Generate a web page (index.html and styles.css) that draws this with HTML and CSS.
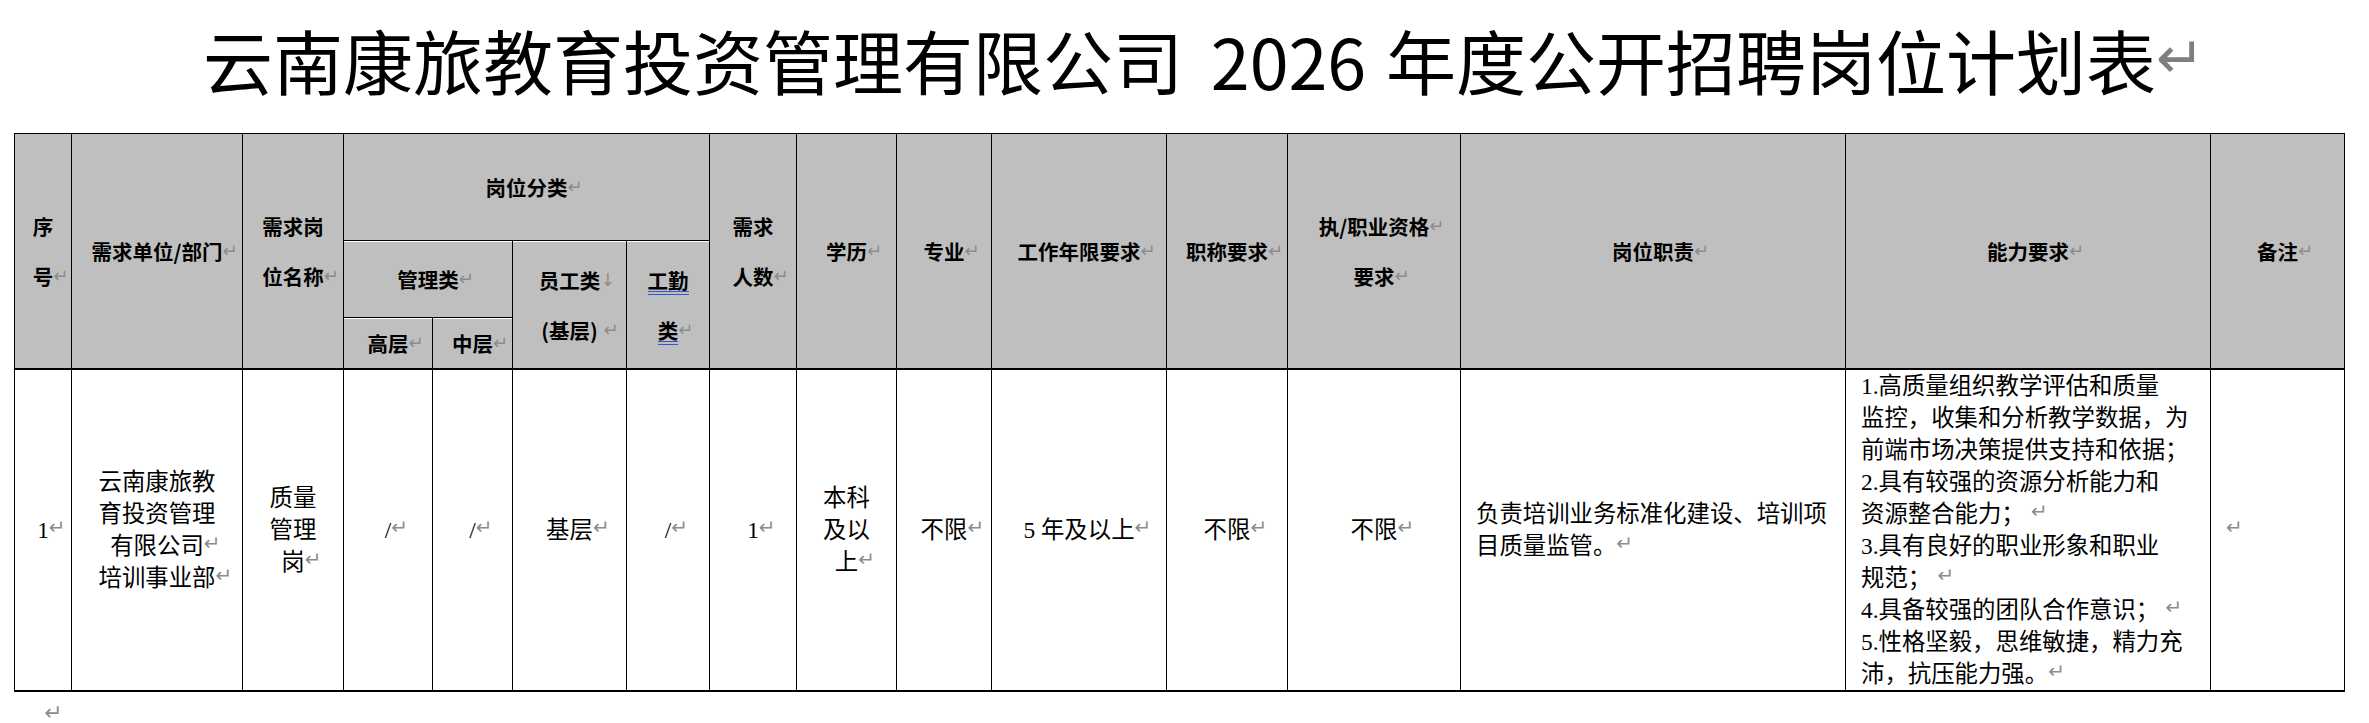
FILE: index.html
```html
<!DOCTYPE html>
<html lang="zh-CN">
<head>
<meta charset="utf-8">
<title>云南康旅教育投资管理有限公司 2026 年度公开招聘岗位计划表</title>
<link rel="stylesheet" href="styles.css">
</head>
<body>
<div class="page">
  <h1 class="title">云南康旅教育投资管理有限公司 <span class="yr">2026</span> 年度公开招聘岗位计划表<span class="pm pm-title">↵</span></h1>
  <table class="plan">
    <colgroup>
      <col class="w57"><col class="w171"><col class="w101"><col class="w89"><col class="w80"><col class="w114"><col class="w83"><col class="w87"><col class="w100"><col class="w95"><col class="w175"><col class="w121"><col class="w173"><col class="w385"><col class="w365"><col class="w134">
    </colgroup>
    <thead>
      <tr class="hr1">
        <th rowspan="3">序<br>号<span class="pm">↵</span></th>
        <th rowspan="3">需求单位/部门<span class="pm">↵</span></th>
        <th rowspan="3">需求岗<br>位名称<span class="pm">↵</span></th>
        <th colspan="4">岗位分类<span class="pm">↵</span></th>
        <th rowspan="3">需求<br>人数<span class="pm">↵</span></th>
        <th rowspan="3">学历<span class="pm">↵</span></th>
        <th rowspan="3">专业<span class="pm">↵</span></th>
        <th rowspan="3">工作年限要求<span class="pm">↵</span></th>
        <th rowspan="3">职称要求<span class="pm">↵</span></th>
        <th rowspan="3">执/职业资格<span class="pm">↵</span><br>要求<span class="pm">↵</span></th>
        <th rowspan="3">岗位职责<span class="pm">↵</span></th>
        <th rowspan="3">能力要求<span class="pm">↵</span></th>
        <th rowspan="3">备注<span class="pm">↵</span></th>
      </tr>
      <tr class="hr2">
        <th colspan="2" class="sub">管理类<span class="pm">↵</span></th>
        <th rowspan="2" class="sub">员工类<span class="pm">↓</span><br>(基层)<span class="pm"> ↵</span></th>
        <th rowspan="2" class="sub"><span class="mark">工勤</span><br><span class="mark">类</span><span class="pm">↵</span></th>
      </tr>
      <tr class="hr3">
        <th class="sub">高层<span class="pm">↵</span></th>
        <th class="sub">中层<span class="pm">↵</span></th>
      </tr>
    </thead>
    <tbody>
      <tr class="br1">
        <td>1<span class="pm">↵</span></td>
        <td>云南康旅教<br>育投资管理<br>有限公司<span class="pm">↵</span><br>培训事业部<span class="pm">↵</span></td>
        <td>质量<br>管理<br>岗<span class="pm">↵</span></td>
        <td>/<span class="pm">↵</span></td>
        <td>/<span class="pm">↵</span></td>
        <td>基层<span class="pm">↵</span></td>
        <td>/<span class="pm">↵</span></td>
        <td>1<span class="pm">↵</span></td>
        <td>本科<br>及以<br>上<span class="pm">↵</span></td>
        <td>不限<span class="pm">↵</span></td>
        <td>5 年及以上<span class="pm">↵</span></td>
        <td>不限<span class="pm">↵</span></td>
        <td>不限<span class="pm">↵</span></td>
        <td class="left">负责培训业务标准化建设、培训项<br>目质量监管。<span class="pm">↵</span></td>
        <td class="left">1.高质量组织教学评估和质量<br>监控，收集和分析教学数据，为<br>前端市场决策提供支持和依据；<br>2.具有较强的资源分析能力和<br>资源整合能力；<span class="pm"> ↵</span><br>3.具有良好的职业形象和职业<br>规范；<span class="pm"> ↵</span><br>4.具备较强的团队合作意识；<span class="pm"> ↵</span><br>5.性格坚毅，思维敏捷，精力充<br>沛，抗压能力强。<span class="pm">↵</span></td>
        <td class="left"><span class="pm">↵</span></td>
      </tr>
    </tbody>
  </table>
  <p class="after"><span class="pm pm-after">↵</span></p>
</div>
</body>
</html>
```
FILE: styles.css
```css
html, body {
  margin: 0;
  padding: 0;
  background: #fff;
}

body {
  font-family: "Liberation Serif", "Noto Sans CJK SC", serif;
  color: #000;
}

.page {
  margin-left: 14px;
  width: 2331px;
}

.title {
  box-sizing: border-box;
  height: 133px;
  margin: 0;
  padding-top: 9px;
  font-family: "Noto Sans CJK SC", sans-serif;
  font-weight: 400;
  font-size: 70px;
  line-height: 101px;
  text-align: center;
  white-space: nowrap;
}

.yr {
  margin-left: 12px;
  margin-right: 4px;
}

.pm {
  display: inline-block;
  width: 0;
  white-space: pre;
  font-family: "DejaVu Sans", sans-serif;
  font-weight: 400;
  font-size: 18px;
  line-height: 1;
  color: #8c8c8c;
  vertical-align: 3px;
}

.pm-title {
  font-size: 58px;
  color: #7f7f7f;
  vertical-align: 12px;
}

.plan {
  border-collapse: collapse;
  table-layout: fixed;
  width: 2331px;
}

.w57 { width: 57px; }
.w171 { width: 171px; }
.w101 { width: 101px; }
.w89 { width: 89px; }
.w80 { width: 80px; }
.w114 { width: 114px; }
.w83 { width: 83px; }
.w87 { width: 87px; }
.w100 { width: 100px; }
.w95 { width: 95px; }
.w175 { width: 175px; }
.w121 { width: 121px; }
.w173 { width: 173px; }
.w385 { width: 385px; }
.w365 { width: 365px; }
.w134 { width: 134px; }

.plan th,
.plan td {
  border: 1px solid #000;
  padding: 0;
  vertical-align: middle;
  text-align: center;
  white-space: nowrap;
}

.plan th {
  background: #bfbfbf;
  font-family: "Noto Sans CJK SC", sans-serif;
  font-weight: 700;
  font-size: 20.5px;
  line-height: 50px;
}

.plan th.sub {
  box-shadow: inset 0 1px 0 #fff;
}

.hr1 { height: 107px; }
.hr2 { height: 77px; }
.hr3 { height: 51px; }

.plan td {
  font-size: 23.4px;
  line-height: 32px;
  border-top: 2px solid #000;
  border-bottom: 2px solid #000;
}

.plan td .pm {
  font-size: 20px;
  vertical-align: 4px;
}

.br1 { height: 321px; }

.plan td.left {
  text-align: left;
  padding-left: 15px;
}

.mark {
  display: inline-block;
  line-height: 22px;
  border-bottom: 4px double #2e5ac8;
}

.after {
  margin: 0;
  padding: 10px 0 0 30px;
  height: 20px;
  font-size: 20px;
  line-height: 20px;
}

.pm-after {
  font-size: 22px;
  color: #8c8c8c;
  vertical-align: 0;
}
```
